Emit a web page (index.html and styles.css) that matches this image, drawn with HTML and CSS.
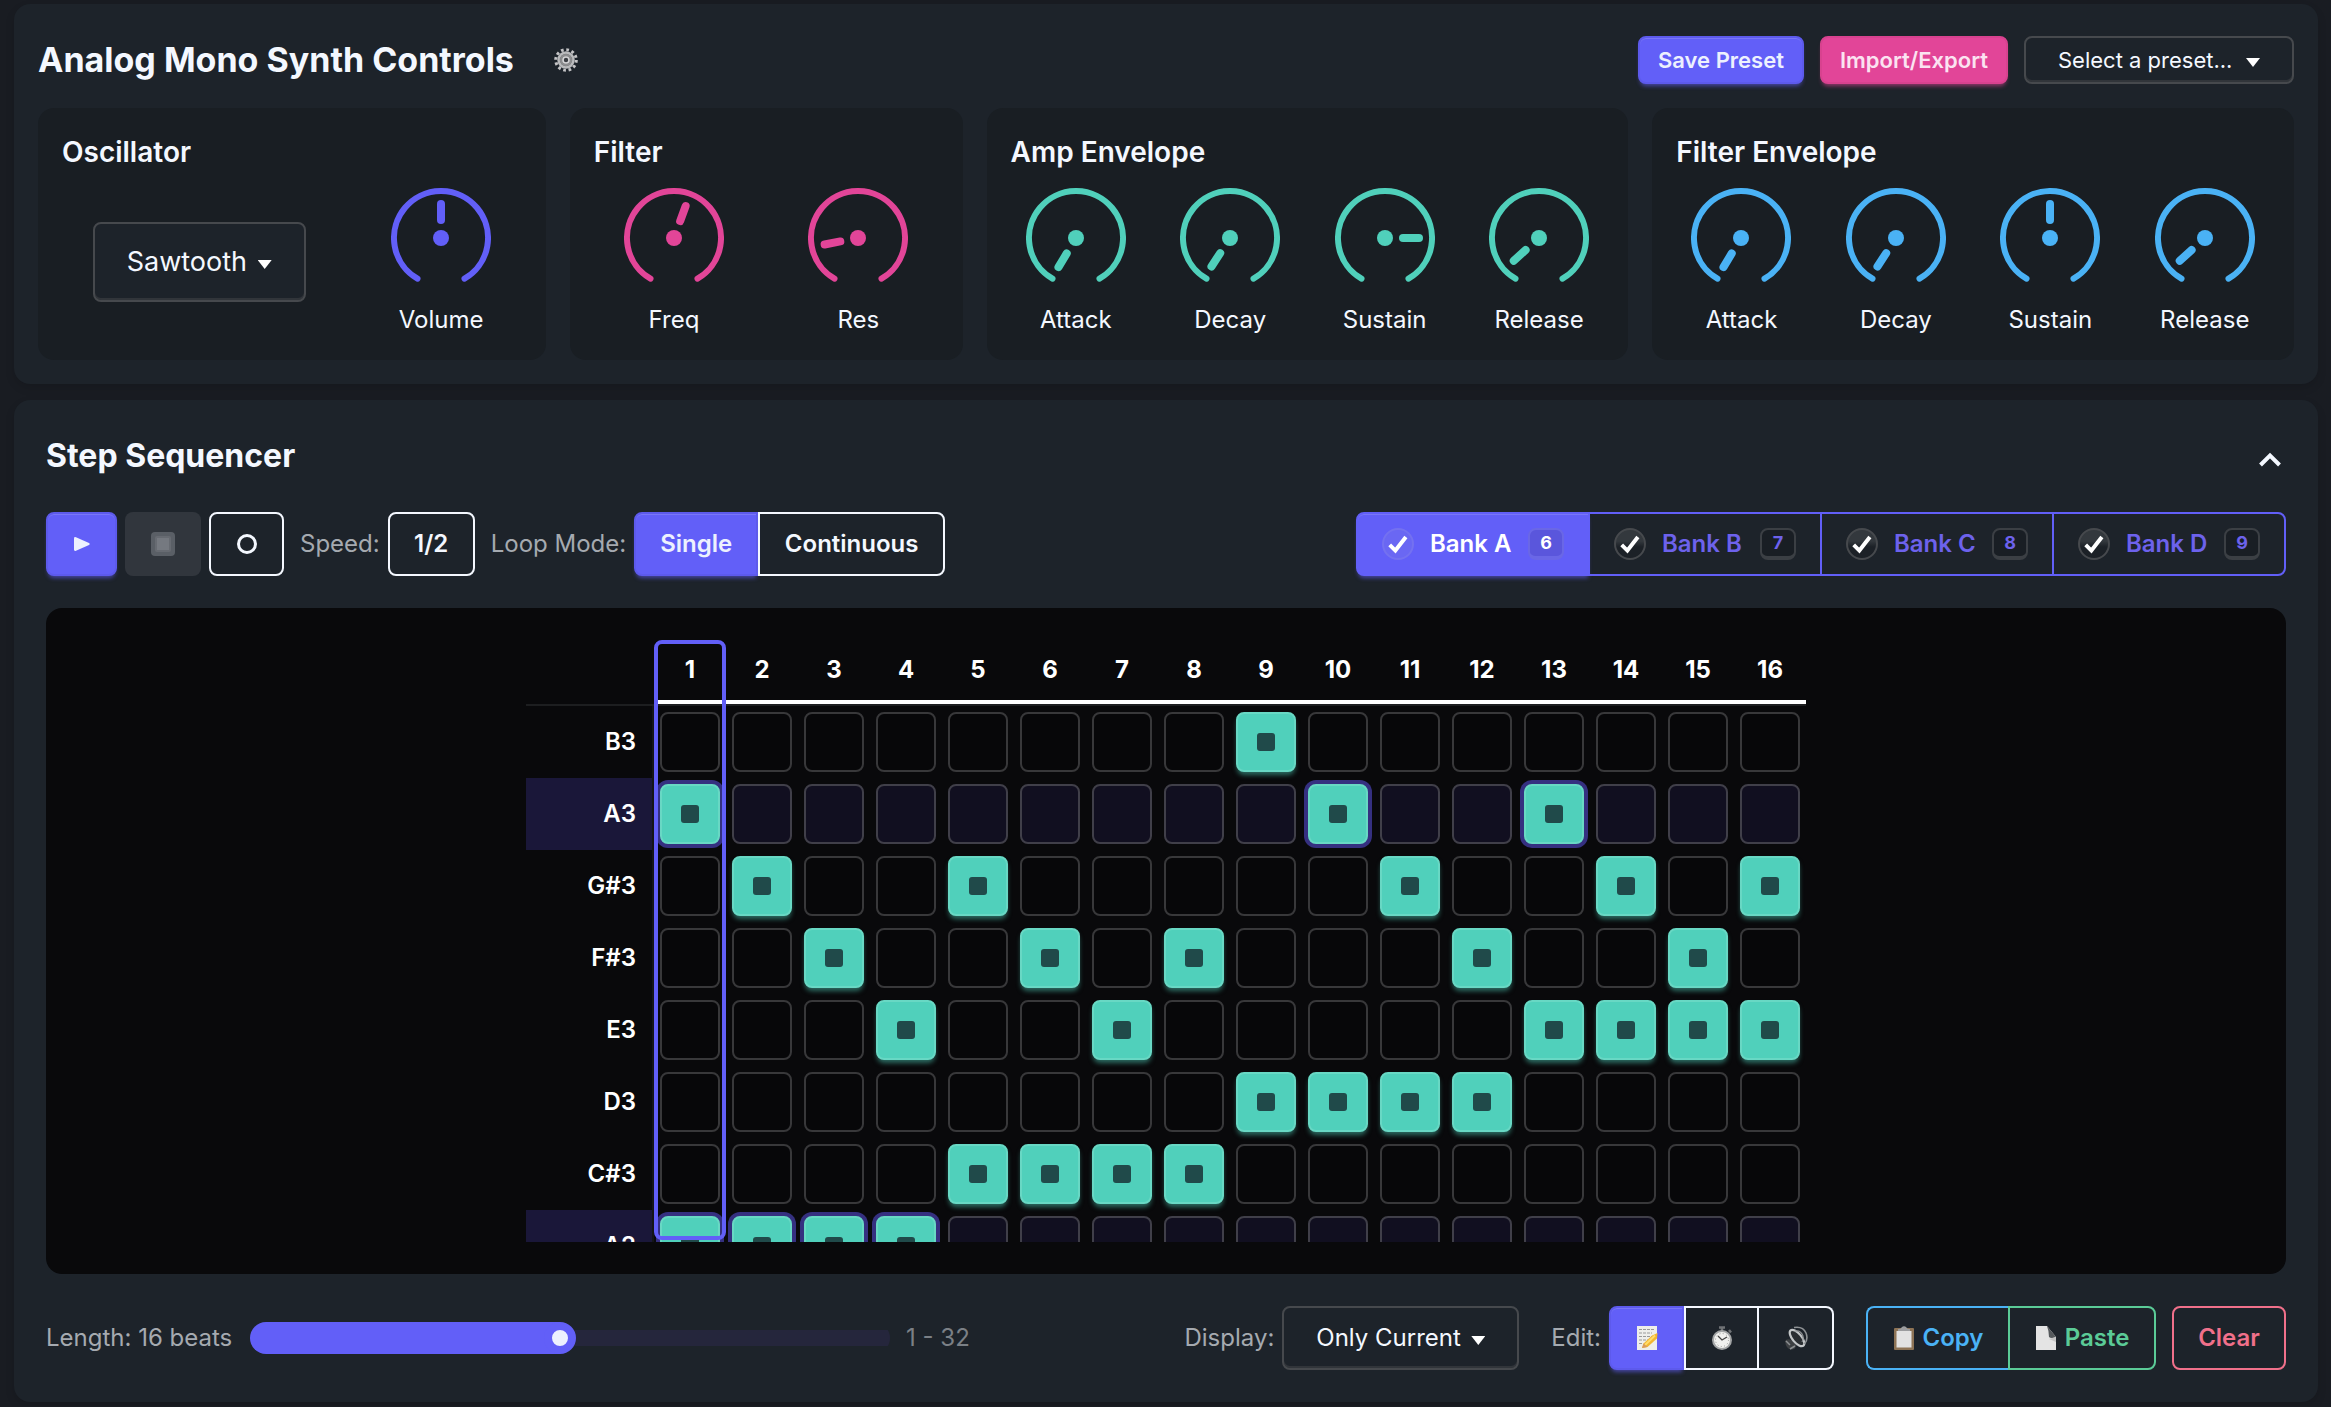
FILE: index.html
```html
<!DOCTYPE html>
<html lang="en">
<head>
<meta charset="utf-8">
<meta name="viewport" content="width=device-width, initial-scale=1">
<title>Analog Mono Synth</title>
<link rel="stylesheet" href="styles.css">
</head>
<body>
<svg class="defs" aria-hidden="true">
  <symbol id="dial" viewBox="-50 -50 100 100">
    <path d="M-23.5 40.7A47 47 0 1 1 23.5 40.7" fill="none" stroke="currentColor" stroke-width="6" stroke-linecap="round"/>
    <circle r="8" fill="currentColor"/>
  </symbol>
  <symbol id="check" viewBox="0 0 32 32">
    <path d="M6.500 17L13 23.500L25 8" fill="none" stroke="#fff" stroke-width="4.500"/>
  </symbol>
</svg>

<main class="page">
  <section class="panel synth">
    <header class="synth-head">
      <h1 class="title">Analog Mono Synth Controls</h1>
      <button class="gear" type="button" aria-label="Settings">
        <svg viewBox="-12 -12 24 24" width="24" height="24">
          <circle r="10.300" fill="none" stroke="#c4c4c6" stroke-width="3" stroke-dasharray="2.700 2.693"/>
          <circle r="7.500" fill="#77787a" stroke="#b9babc" stroke-width="2.500"/>
          <circle r="5" fill="none" stroke="#8c8d8f" stroke-width="2"/>
          <circle r="3" fill="#3a3d42" stroke="#d5d5d7" stroke-width="1.600"/>
        </svg>
      </button>
      <div class="preset-actions">
        <button class="btn btn-small btn-primary btn-save" type="button">Save Preset</button>
        <button class="btn btn-small btn-secondary btn-import" type="button">Import/Export</button>
        <span class="select select-preset">
          <select aria-label="Preset"><option>Select a preset...</option></select>
        </span>
      </div>
    </header>

    <div class="modules">
      <section class="card">
        <h2 class="card-title">Oscillator</h2>
        <div class="knobs">
          <span class="select select-wave">
            <select aria-label="Waveform"><option>Sawtooth</option></select>
          </span>
          <div class="knob violet"><svg viewBox="-50 -50 100 100"><use href="#dial" x="-50" y="-50" width="100" height="100"/><path class="hand" d="M0 -34V-18"/></svg><span>Volume</span></div>
        </div>
      </section>
      <section class="card">
        <h2 class="card-title">Filter</h2>
        <div class="knobs">
          <div class="knob pink"><svg viewBox="-50 -50 100 100"><use href="#dial" x="-50" y="-50" width="100" height="100"/><path class="hand" d="M0 -34V-18" transform="rotate(20)"/></svg><span>Freq</span></div>
          <div class="knob pink"><svg viewBox="-50 -50 100 100"><use href="#dial" x="-50" y="-50" width="100" height="100"/><path class="hand" d="M0 -34V-18" transform="rotate(-101)"/></svg><span>Res</span></div>
        </div>
      </section>
      <section class="card">
        <h2 class="card-title">Amp Envelope</h2>
        <div class="knobs">
          <div class="knob teal"><svg viewBox="-50 -50 100 100"><use href="#dial" x="-50" y="-50" width="100" height="100"/><path class="hand" d="M0 -34V-18" transform="rotate(-149)"/></svg><span>Attack</span></div>
          <div class="knob teal"><svg viewBox="-50 -50 100 100"><use href="#dial" x="-50" y="-50" width="100" height="100"/><path class="hand" d="M0 -34V-18" transform="rotate(-147)"/></svg><span>Decay</span></div>
          <div class="knob teal"><svg viewBox="-50 -50 100 100"><use href="#dial" x="-50" y="-50" width="100" height="100"/><path class="hand" d="M0 -34V-18" transform="rotate(90)"/></svg><span>Sustain</span></div>
          <div class="knob teal"><svg viewBox="-50 -50 100 100"><use href="#dial" x="-50" y="-50" width="100" height="100"/><path class="hand" d="M0 -34V-18" transform="rotate(-132)"/></svg><span>Release</span></div>
        </div>
      </section>
      <section class="card">
        <h2 class="card-title">Filter Envelope</h2>
        <div class="knobs">
          <div class="knob blue"><svg viewBox="-50 -50 100 100"><use href="#dial" x="-50" y="-50" width="100" height="100"/><path class="hand" d="M0 -34V-18" transform="rotate(-149)"/></svg><span>Attack</span></div>
          <div class="knob blue"><svg viewBox="-50 -50 100 100"><use href="#dial" x="-50" y="-50" width="100" height="100"/><path class="hand" d="M0 -34V-18" transform="rotate(-147)"/></svg><span>Decay</span></div>
          <div class="knob blue"><svg viewBox="-50 -50 100 100"><use href="#dial" x="-50" y="-50" width="100" height="100"/><path class="hand" d="M0 -34V-18"/></svg><span>Sustain</span></div>
          <div class="knob blue"><svg viewBox="-50 -50 100 100"><use href="#dial" x="-50" y="-50" width="100" height="100"/><path class="hand" d="M0 -34V-18" transform="rotate(-132)"/></svg><span>Release</span></div>
        </div>
      </section>
    </div>
  </section>

  <section class="panel sequencer">
    <header class="seq-head">
      <h2 class="title title-seq">Step Sequencer</h2>
      <button class="collapse" type="button" aria-label="Collapse">
        <svg viewBox="0 0 24 16" width="24" height="16"><path d="M2.500 13L12 3.500L21.500 13" fill="none" stroke="#f4f8ff" stroke-width="4"/></svg>
      </button>
    </header>

    <div class="toolbar">
      <div class="transport">
        <button class="btn btn-primary btn-play" type="button" aria-label="Play">
          <svg viewBox="0 0 20 18" width="20" height="18"><path d="M2 3.500Q2 1.500 4 2.200L17 8Q18.800 9 17 10L4 15.800Q2 16.500 2 14.500Z" fill="#edf1fe"/></svg>
        </button>
        <button class="btn btn-stop" type="button" aria-label="Stop" disabled>
          <svg viewBox="0 0 24 24" width="24" height="24"><rect width="24" height="24" rx="4" fill="#5a5f66"/><rect x="4" y="4" width="16" height="16" rx="2" fill="#676b72"/><rect x="6" y="6" width="12" height="12" fill="#757980"/></svg>
        </button>
        <button class="btn btn-outline btn-record" type="button" aria-label="Record">
          <svg viewBox="0 0 22 22" width="22" height="22"><circle cx="11" cy="11" r="8.500" fill="none" stroke="#f4f8ff" stroke-width="3"/></svg>
        </button>
      </div>
      <div class="field">
        <span class="muted" id="speed">Speed:</span>
        <button class="btn btn-outline btn-speed" type="button" aria-describedby="speed">1/2</button>
      </div>
      <div class="field">
        <span class="muted" id="loop">Loop Mode:</span>
        <div class="join" role="group" aria-labelledby="loop">
          <button class="btn btn-primary btn-single" type="button">Single</button>
          <button class="btn btn-outline btn-continuous" type="button">Continuous</button>
        </div>
      </div>
      <div class="banks" role="group" aria-label="Pattern banks">
        <button class="bank active" type="button"><svg class="tick"><use href="#check"/></svg>Bank A<kbd>6</kbd></button>
        <button class="bank" type="button"><svg class="tick"><use href="#check"/></svg>Bank B<kbd>7</kbd></button>
        <button class="bank" type="button"><svg class="tick"><use href="#check"/></svg>Bank C<kbd>8</kbd></button>
        <button class="bank" type="button"><svg class="tick"><use href="#check"/></svg>Bank D<kbd>9</kbd></button>
      </div>
    </div>

    <div class="stage">
      <div class="roll">
        <table class="steps">
          <thead><tr id="beats"><th class="corner"></th></tr></thead>
          <tbody id="rows"></tbody>
        </table>
        <div class="playhead"></div>
      </div>
    </div>

    <footer class="seq-foot">
      <div class="length">
        <label class="muted length-label" for="length">Length: 16 beats</label>
        <input class="range" id="length" type="range" min="1" max="32" value="16" style="--pos: 0.484">
        <span class="faint">1 - 32</span>
      </div>
      <div class="foot-actions">
        <div class="field">
          <label class="muted" for="display">Display:</label>
          <span class="select select-display">
            <select id="display"><option>Only Current</option></select>
          </span>
        </div>
        <div class="field edit">
          <span class="muted" id="edit">Edit:</span>
          <div class="join" role="group" aria-labelledby="edit">
            <button class="btn btn-primary btn-icon" type="button" aria-label="Notes">
              <svg viewBox="0 0 24 24" width="24" height="24"><rect x="2" width="20" height="24" fill="#eeeeea"/><path d="M4 3.500H19M4 7H17M4 10.500H18M4 14H13M4 17.500H8" stroke="#999" stroke-width="1.200" stroke-dasharray="3 1"/><path d="M8.500 17.500L17 9.500L22.500 7L22 12.500L12.500 21L7 22Z" fill="#f2b632"/><path d="M10 19L20 9.500" stroke="#ffdc6b" stroke-width="2"/><path d="M7 22L8.500 17.500L12.500 21Z" fill="#d79b62"/></svg>
            </button>
            <button class="btn btn-outline btn-icon" type="button" aria-label="Timing">
              <svg viewBox="0 0 24 24" width="24" height="24"><path d="M9 1.500H15M12 1V5M19 4L21 6.500" stroke="#6f7275" stroke-width="2.500"/><circle cx="12" cy="14" r="9" fill="#f1f1ef" stroke="#a3a5a6" stroke-width="2"/><circle cx="12" cy="14" r="6.500" fill="none" stroke="#9a9a98" stroke-dasharray="1 2.400"/><path d="M8 10L12 14L17 11" fill="none" stroke="#444" stroke-width="1.300"/></svg>
            </button>
            <button class="btn btn-outline btn-icon" type="button" aria-label="Velocity">
              <svg viewBox="0 0 24 24" width="24" height="24" fill="none"><path d="M1 15Q3 12 7 14L8 4L18 18L12 20Q11 24 7 23.500Q2 23 1 15Z" fill="#3d4043"/><ellipse cx="13" cy="12" rx="4.500" ry="10" transform="rotate(-40 13 12)" fill="#2a2e32" stroke="#c3c6c8" stroke-width="2.200"/><path d="M10 1.500Q19 0 22 7Q24.500 13 20.500 18" stroke="#8d9194" stroke-width="1.600"/><path d="M11 5Q17 4 19 10Q20 13 18 16" stroke="#8b8e91" stroke-width="1.200"/><path d="M2 15L6 19M6 23L11 20" stroke="#8b8e91" stroke-width="1.500"/></svg>
            </button>
          </div>
        </div>
        <div class="join clip">
          <button class="btn btn-copy" type="button">
            <svg viewBox="0 0 22 24" width="22" height="24"><rect x="1" y="2" width="20" height="22" rx="1" fill="#8d7355"/><rect x="3.500" y="5" width="15" height="16.500" fill="#e2e2e2"/><path d="M5 5V3Q8 3 8.500 1.500Q11 -1 13.500 1.500Q14 3 17 3V5Z" fill="#9b9c9e"/></svg>Copy</button>
          <button class="btn btn-paste" type="button">
            <svg viewBox="0 0 22 24" width="22" height="24"><path d="M1 0H12L21 11V24H1Z" fill="#e4e4e4"/><path d="M12 0L21 11Q16 13 14 11Q14 5 12 0Z" fill="#55595c"/><path d="M14 13L21 11V16Z" fill="#c4c4c4"/></svg>Paste</button>
        </div>
        <button class="btn btn-clear" type="button">Clear</button>
      </div>
    </footer>
  </section>
</main>
<script src="steps.js"></script>
</body>
</html>
```
FILE: styles.css
```css
*, *::before, *::after { box-sizing: border-box; }

:root {
  --violet: #625ff8;
  --pink: #e24598;
  --teal: #50d0bb;
  --blue: #4ab2f5;
  --green: #5bcb97;
  --red: #f0708a;
  --text: #f4f8ff;
  --base: #1d232a;
  --inset: #191e23;
  --line: #46494d;
}

body {
  margin: 0;
  background: #191c22;
  color: var(--text);
  font-family: Inter, "Liberation Sans", sans-serif;
  font-size: 24px;
  line-height: 32px;
}

h1, h2 { margin: 0; }
button, select, input { font: inherit; color: inherit; margin: 0; }
button { cursor: pointer; }
svg { display: block; flex: none; }
.defs { position: absolute; width: 0; height: 0; }

.page {
  display: flex;
  flex-direction: column;
  gap: 16px;
  padding: 4px 13px 4px 14px;
}

.panel {
  background: var(--base);
  border-radius: 16px;
  box-shadow: 0 4px 10px rgba(0, 0, 0, 0.12);
}

.title { font-size: 34px; line-height: 48px; font-weight: 700; }
.title-seq { font-size: 32px; }
.muted { color: #a5aab0; }
.faint { color: #7b8086; }

/* buttons */
.btn {
  display: inline-flex;
  align-items: center;
  justify-content: center;
  height: 64px;
  padding: 0;
  border: 2px solid transparent;
  border-radius: 8px;
  background: none;
  font-weight: 600;
  white-space: nowrap;
}
.btn-small { height: 48px; font-size: 22px; }
.btn-primary {
  background: var(--violet);
  border-color: #5d5aec;
  color: #edf1fe;
  box-shadow: inset 0 1px #7976f8, 0 4px 4px -2px rgba(98, 95, 248, 0.6);
}
.btn-secondary {
  background: var(--pink);
  border-color: #d8428f;
  color: #fbe3f1;
  box-shadow: 0 4px 4px -2px rgba(226, 69, 152, 0.6);
}
.btn-outline { border-color: var(--text); }
.join { display: flex; }
.join .btn:not(:first-child) { border-top-left-radius: 0; border-bottom-left-radius: 0; }
.join .btn:not(:last-child) { border-top-right-radius: 0; border-bottom-right-radius: 0; }

/* drop-downs */
.select { position: relative; display: inline-flex; }
.select select {
  appearance: none;
  width: 100%;
  height: 64px;
  padding: 0 32px;
  border: 2px solid var(--line);
  border-radius: 8px;
  background: var(--base);
  box-shadow: inset 0 -2px #31353a;
}
.select::after {
  content: "";
  position: absolute;
  right: 34px;
  top: calc(50% - 2px);
  width: 14px;
  height: 9px;
  background: #fff;
  clip-path: polygon(0 0, 100% 0, 50% 100%);
  pointer-events: none;
}
.select-preset { width: 270px; }
.select-preset select { height: 48px; font-size: 22px; }
.select-wave { width: 213px; align-self: flex-start; margin-top: 34px; }
.select-wave select { height: 80px; font-size: 27px; }
.select-display { width: 237px; }

/* synth controls */
.synth { padding: 24px; }
.synth-head { display: flex; align-items: center; height: 64px; margin-bottom: 16px; }
.gear { display: flex; margin-left: 32px; padding: 8px; border: 0; background: none; }
.preset-actions { display: flex; gap: 16px; margin-left: auto; }
.btn-save { width: 166px; }
.btn-import { width: 188px; }

.modules { display: grid; grid-template-columns: 508fr 393fr 642fr 642fr; gap: 24px; }
.card { padding: 24px 12px; border-radius: 16px; background: var(--inset); }
.card-title { padding: 0 12px; font-size: 28px; line-height: 40px; font-weight: 600; }
.knobs { display: flex; justify-content: space-around; margin-top: 16px; }
.knob { display: flex; flex-direction: column; align-items: center; gap: 16px; width: 100px; }
.knob svg { width: 100px; height: 100px; }
.knob span { color: var(--text); }
.hand { stroke: currentColor; stroke-width: 8px; stroke-linecap: round; }
.violet { color: var(--violet); }
.pink { color: var(--pink); }
.teal { color: var(--teal); }
.blue { color: var(--blue); }

/* sequencer */
.sequencer { padding: 32px; }
.seq-head { display: flex; align-items: center; justify-content: space-between; height: 48px; margin-bottom: 32px; }
.collapse { display: flex; margin-top: 8px; padding: 8px 4px; border: 0; background: none; }

.toolbar { display: flex; align-items: center; gap: 16px; margin-bottom: 32px; }
.transport { display: flex; gap: 8px; }
.field { display: flex; align-items: center; gap: 8px; }
.btn-play { width: 71px; }
.btn-stop { width: 76px; background: #31363d; }
.btn-record { width: 75px; }
.btn-speed { width: 87px; }
.btn-single { width: 124px; }
.btn-continuous { width: 187px; }

.banks { display: flex; margin-left: auto; }
.bank {
  display: flex;
  align-items: center;
  gap: 16px;
  width: 234px;
  height: 64px;
  padding: 0 24px;
  border: 2px solid var(--violet);
  background: none;
  color: #6d62ec;
  font-weight: 600;
  white-space: nowrap;
}
.bank + .bank { margin-left: -2px; }
.bank:first-child { border-radius: 8px 0 0 8px; }
.bank:last-child { border-radius: 0 8px 8px 0; }
.bank.active {
  background: var(--violet);
  color: #fff;
  box-shadow: inset 0 1px #7976f8, 0 4px 4px -2px rgba(98, 95, 248, 0.6);
}
.tick {
  width: 32px;
  height: 32px;
  border: 2px solid var(--line);
  border-radius: 50%;
  background: linear-gradient(#33383d 40%, #1c2127 60%);
}
.active .tick { border-color: #7471f0; background: #6a67f3; }
.bank kbd {
  width: 36px;
  height: 32px;
  margin-left: auto;
  border: 2px solid #3b3f44;
  border-bottom-width: 4px;
  border-radius: 8px;
  background: #191e24;
  font: 700 18px/26px Inter, "Liberation Sans", sans-serif;
  text-align: center;
}
.active kbd { background: #5a56dc; border-color: #6a67e6; }

.stage {
  display: flex;
  justify-content: center;
  padding: 32px;
  border-radius: 16px;
  background: #09090b;
}
.roll { position: relative; max-height: 602px; overflow: hidden; }
.steps { border-spacing: 0; color: #fff; }
.steps th { padding: 0; font-weight: 600; }
.steps thead th {
  width: 72px;
  height: 66px;
  padding-bottom: 4px;
  border-bottom: 2px solid #1d1e20;
  box-shadow: inset 0 -4px #fff;
  font-weight: 700;
}
.steps thead .corner { width: 128px; box-shadow: none; }
.steps tbody th { padding-right: 16px; border-right: 2px solid #141518; text-align: right; }
.steps td { width: 72px; height: 72px; padding: 6px; }
.steps .root th { background: #1a1739; }

.step {
  display: flex;
  align-items: center;
  justify-content: center;
  width: 60px;
  height: 60px;
  padding: 0;
  border: 2px solid #38383a;
  border-radius: 8px;
  background: #070709;
}
.root .step { border-color: #403f49; background: #110f20; }
.step.on {
  border-color: #68d8c4;
  background: var(--teal);
  box-shadow: 0 4px 5px -1px rgba(80, 208, 187, 0.5);
}
.root .step.on { border-color: #68d8c4; background: var(--teal); box-shadow: 0 0 0 4px #353080; }
.step.on::after { content: ""; width: 18px; height: 18px; border-radius: 3px; background: #204a4a; }

.playhead {
  position: absolute;
  top: 0;
  bottom: 2px;
  left: 128px;
  width: 72px;
  border: 4px solid var(--violet);
  border-radius: 8px;
  pointer-events: none;
}

/* footer */
.seq-foot { display: flex; align-items: center; justify-content: space-between; margin-top: 32px; }
.length { display: flex; align-items: center; gap: 16px; }
.length-label { min-width: 188px; }
.range {
  --fill: calc(16px + (100% - 32px) * var(--pos));
  appearance: none;
  width: 640px;
  height: 32px;
  border-radius: 16px;
  background:
    linear-gradient(var(--violet), var(--violet)) left / var(--fill) 100% no-repeat,
    linear-gradient(#25263c, #25263c) center / 100% 16px no-repeat;
}
.range::-webkit-slider-thumb {
  appearance: none;
  width: 32px;
  height: 32px;
  border: 8px solid var(--violet);
  border-radius: 50%;
  background: #edf1fe;
}
.foot-actions { display: flex; gap: 16px; }
.edit { margin: 0 16px; }
.btn-icon { width: 75px; }
.btn-icon:last-child { border-left: 0; }
.btn-copy, .btn-paste { gap: 8px; }
.btn-copy { width: 142px; border-color: var(--blue); border-right: 0; color: var(--blue); }
.btn-paste { width: 148px; border-color: var(--green); color: var(--green); }
.btn-clear { width: 114px; border-color: var(--red); color: var(--red); }
```
FILE: steps.js
```js
const BEATS = 16;
const pattern = [
  { note: "B3", on: [9] },
  { note: "A3", on: [1, 10, 13], root: true },
  { note: "G#3", on: [2, 5, 11, 14, 16] },
  { note: "F#3", on: [3, 6, 8, 12, 15] },
  { note: "E3", on: [4, 7, 13, 14, 15, 16] },
  { note: "D3", on: [9, 10, 11, 12] },
  { note: "C#3", on: [5, 6, 7, 8] },
  { note: "A2", on: [1, 2, 3, 4], root: true },
];

const head = document.getElementById("beats");
for (let beat = 1; beat <= BEATS; beat++) {
  const th = document.createElement("th");
  th.scope = "col";
  th.textContent = beat;
  head.append(th);
}

const body = document.getElementById("rows");
for (const { note, on, root } of pattern) {
  const tr = document.createElement("tr");
  if (root) tr.className = "root";
  const th = document.createElement("th");
  th.scope = "row";
  th.textContent = note;
  tr.append(th);
  for (let beat = 1; beat <= BEATS; beat++) {
    const td = document.createElement("td");
    const step = document.createElement("button");
    step.type = "button";
    step.className = on.includes(beat) ? "step on" : "step";
    step.setAttribute("aria-label", `${note}, beat ${beat}`);
    step.setAttribute("aria-pressed", on.includes(beat));
    td.append(step);
    tr.append(td);
  }
  body.append(tr);
}
```
